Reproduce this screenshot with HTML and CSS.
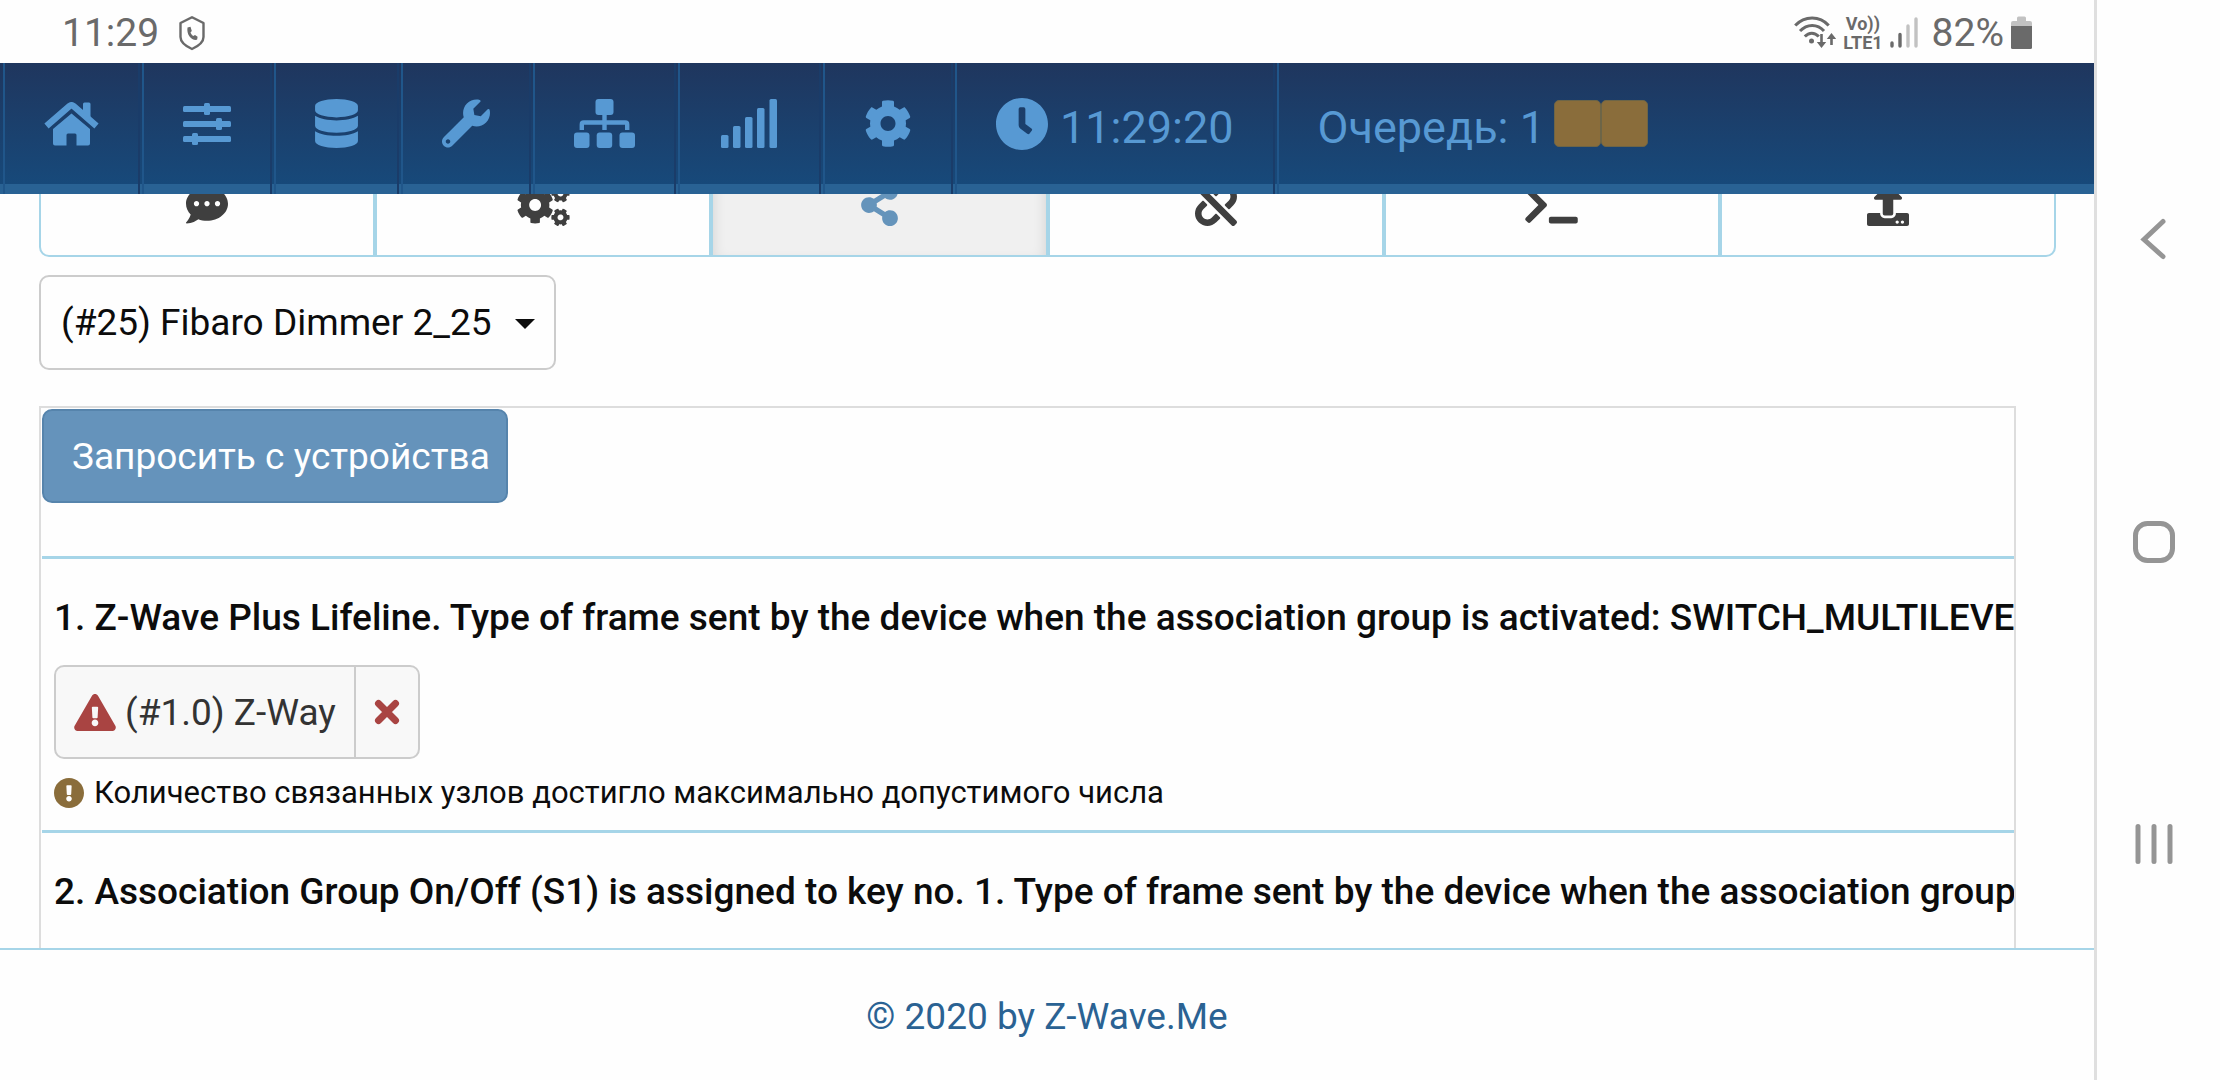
FILE: index.html
```html
<!DOCTYPE html>
<html lang="ru">
<head>
    <meta charset="UTF-8">
    <meta name="viewport" content="width=device-width, initial-scale=1.0">
    <title>Z-Wave.Me Expert UI</title>
    <link rel="stylesheet" href="styles.css">
</head>
<body>
    <!-- Gear shape, used in the menu and in the tabs -->
    <svg class="sprite" aria-hidden="true">
        <symbol id="gear" viewBox="0 0 512 512">
            <path d="M487.4 315.7l-42.6-24.6c4.3-23.2 4.3-47 0-70.2l42.6-24.6c4.9-2.8 7.1-8.6 5.5-14-11.1-35.6-30-67.8-54.7-94.6-3.8-4.1-10-5.1-14.8-2.3L380.8 110c-17.9-15.4-38.5-27.3-60.8-35.1V25.8c0-5.6-3.9-10.5-9.4-11.7-36.7-8.2-74.3-7.8-109.2 0-5.5 1.2-9.4 6.1-9.4 11.7V75c-22.2 7.9-42.8 19.8-60.8 35.1L88.7 85.5c-4.9-2.8-11-1.9-14.8 2.3-24.7 26.7-43.6 58.9-54.7 94.6-1.7 5.4.6 11.2 5.5 14L67.3 221c-4.3 23.2-4.3 47 0 70.2l-42.6 24.6c-4.9 2.8-7.1 8.6-5.5 14 11.1 35.6 30 67.8 54.7 94.6 3.8 4.1 10 5.1 14.8 2.3l42.6-24.6c17.9 15.4 38.5 27.3 60.8 35.1v49.2c0 5.6 3.9 10.5 9.4 11.7 36.7 8.2 74.3 7.8 109.2 0 5.5-1.2 9.4-6.1 9.4-11.7v-49.2c22.2-7.9 42.8-19.8 60.8-35.1l42.6 24.6c4.9 2.8 11 1.9 14.8-2.3 24.7-26.7 43.6-58.9 54.7-94.6 1.5-5.5-.7-11.3-5.6-14.1zM256 336c-44.1 0-80-35.9-80-80s35.9-80 80-80 80 35.9 80 80-35.9 80-80 80z"/>
        </symbol>
    </svg>

    <div class="screen">
        <!-- Phone status bar -->
        <div class="status-bar">
            <span class="status-text">11:29</span>
            <svg class="status-shield" width="26" height="36" viewBox="0 0 26 36">
                <path d="M13 2.2L24.5 8v14c0 5-6 9.500-11.500 12C7.500 31.500 1.500 27 1.500 22V8z" fill="none" stroke="#6a6a6a" stroke-width="2.400" stroke-linejoin="round"/>
                <path d="M8.500 12.500l3-.8 1.300 4.200-1.300 1.600c.6 1.600 1.400 2.600 2.700 3.400l1.800-.8 2.600 1.700-.5 3c-5.600 1-10.800-5-9.600-12.300z" fill="#6a6a6a"/>
            </svg>
            <div class="status-right">
                <svg width="42" height="34" viewBox="0 0 42 34">
                    <path d="M1.200 9.500c9.500-10 24.500-10 33.500 0M6 15c7-7.500 17.500-7.500 24 0M10.800 20.500c4.200-4.500 9.800-4.500 14 0" fill="none" stroke="#6a6a6a" stroke-width="3"/>
                    <circle cx="17.500" cy="25" r="2.500"/>
                    <path d="M27.500 18v11M37.500 29V21" stroke="#6a6a6a" stroke-width="2.600"/>
                    <path d="M22.800 26h9.400l-4.700 6zM32.800 23h9.400l-4.700-6z"/>
                </svg>
                <span class="volte"><span>Vo))</span><span>LTE1</span></span>
                <svg width="28" height="34" viewBox="0 0 28 34" stroke-width="3.400" stroke-linecap="round">
                    <path d="M2 27v3M10 18.500V30" stroke="#6a6a6a"/>
                    <path d="M18 10v20M26 3v27" stroke="#c2c2c2"/>
                </svg>
                <span class="status-text">82%</span>
                <svg class="battery" width="21" height="34" viewBox="0 0 21 34">
                    <path d="M6 5V2q0-1.500 1.500-1.500h6Q15 .5 15 2v3h4q2 0 2 2v4H0V7q0-2 2-2z" fill="#c2c2c2"/>
                    <path d="M0 10h21v21.500q0 1.500-1.500 1.500h-18Q0 33 0 31.500z" fill="#6a6a6a"/>
                </svg>
            </div>
        </div>

        <!-- Main menu -->
        <nav class="navbar">
            <a class="nav-item" href="#" aria-label="Home">
                <svg width="55" height="44" viewBox="0 0 54 44">
                    <path d="M2 24L25 4q2-1.500 4 0l23 20" fill="none" stroke="currentColor" stroke-width="6.400"/>
                    <path d="M38.500 2q0-1.500 1.500-1.500h4.500Q46 .5 46 2v16l-7.500-6.500zM27 11.500L45.500 27v14.500q0 2-2 2H32V33q0-1.500-1.500-1.500h-7Q22 31.500 22 33v10.500H10.500q-2 0-2-2V27z"/>
                </svg>
            </a>
            <a class="nav-item" href="#" aria-label="Control">
                <svg width="48" height="44" viewBox="0 0 48 44">
                    <rect y="4" width="48" height="6" rx="1.500"/>
                    <rect y="19" width="48" height="6" rx="1.500"/>
                    <rect y="34" width="48" height="6" rx="1.500"/>
                    <rect x="21" y="1" width="6" height="12" rx="1.500"/>
                    <rect x="33" y="16" width="6" height="12" rx="1.500"/>
                    <rect x="9" y="31" width="6" height="12" rx="1.500"/>
                </svg>
            </a>
            <a class="nav-item" href="#" aria-label="Device">
                <svg width="43" height="49" viewBox="0 0 448 512">
                    <path d="M448 73.143v45.714C448 159.143 347.667 192 224 192S0 159.143 0 118.857V73.143C0 32.857 100.333 0 224 0s224 32.857 224 73.143zM448 176v102.857C448 319.143 347.667 352 224 352S0 319.143 0 278.857V176c48.125 33.143 136.208 48.572 224 48.572S399.874 209.143 448 176zm0 160v102.857C448 479.143 347.667 512 224 512S0 479.143 0 438.857V336c48.125 33.143 136.208 48.572 224 48.572S399.874 369.143 448 336z"/>
                </svg>
            </a>
            <a class="nav-item" href="#" aria-label="Configuration">
                <svg width="48" height="49" viewBox="0 0 512 512">
                    <path d="M507.730 109.100c-2.240-9.030-13.540-12.090-20.120-5.510l-74.360 74.360-67.880-11.310-11.310-67.880 74.360-74.360c6.620-6.620 3.430-17.900-5.660-20.160-47.380-11.740-99.550.910-136.580 37.930-39.640 39.640-50.550 97.100-34.050 147.200L18.740 402.760c-24.990 24.990-24.990 65.510 0 90.500 24.990 24.990 65.510 24.990 90.500 0l213.210-213.210c50.120 16.710 107.470 5.680 147.370-34.220 37.070-37.070 49.700-89.320 37.910-136.730zM64 472c-13.250 0-24-10.750-24-24 0-13.260 10.750-24 24-24s24 10.740 24 24c0 13.250-10.750 24-24 24z"/>
                </svg>
            </a>
            <a class="nav-item" href="#" aria-label="Network">
                <svg width="61" height="49" viewBox="0 0 61 49">
                    <rect x="21.500" width="18" height="16" rx="3"/>
                    <rect y="33.500" width="15.500" height="15.500" rx="3"/>
                    <rect x="22.700" y="33.500" width="15.500" height="15.500" rx="3"/>
                    <rect x="45.500" y="33.500" width="15.500" height="15.500" rx="3"/>
                    <path d="M7.800 31v-5.500q0-2 2-2h41.400q2 0 2 2V31M30.500 15v16" fill="none" stroke="currentColor" stroke-width="4.400"/>
                </svg>
            </a>
            <a class="nav-item" href="#" aria-label="Signal">
                <svg width="61" height="49" viewBox="0 0 61 49">
                    <rect x="2" y="36" width="7.500" height="13" rx="1.500"/>
                    <rect x="14" y="27" width="7.500" height="22" rx="1.500"/>
                    <rect x="26" y="18" width="7.500" height="31" rx="1.500"/>
                    <rect x="38" y="9" width="7.500" height="40" rx="1.500"/>
                    <rect x="50.500" width="7.500" height="49" rx="1.500"/>
                </svg>
            </a>
            <a class="nav-item" href="#" aria-label="Settings">
                <svg width="48" height="49"><use href="#gear"/></svg>
            </a>
            <a class="nav-item" href="#">
                <svg width="52" height="52" viewBox="8 8 496 496">
                    <path d="M256,8C119,8,8,119,8,256S119,504,256,504,504,393,504,256,393,8,256,8Zm92.490,313h0l-20,25a16,16,0,0,1-22.490,2.500h0l-67-49.720a40,40,0,0,1-15-31.230V112a16,16,0,0,1,16-16h32a16,16,0,0,1,16,16V256l58,42.500A16,16,0,0,1,348.490,321Z"/>
                </svg>
                <span class="nav-text">11:29:20</span>
            </a>
            <a class="nav-item nav-queue" href="#">
                <span class="nav-text">Очередь: 1</span>
                <span class="queue-boxes"><i></i><i></i></span>
            </a>
        </nav>

        <main class="content">
            <!-- Tabs, scrolled under the menu -->
            <div class="tabs">
                <button class="tab" type="button" aria-label="Interview">
                    <svg width="42" height="42" viewBox="0 0 512 512">
                        <path d="M256 32C114.600 32 0 125.100 0 240c0 49.600 21.400 95 57 130.700C44.500 421.100 2.700 466 2.200 466.500c-2.200 2.300-2.800 5.700-1.500 8.700S4.800 480 8 480c66.300 0 116-31.800 140.600-51.400 32.700 12.300 69 19.400 107.400 19.400 141.400 0 256-93.100 256-208S397.400 32 256 32zM128 272c-17.700 0-32-14.300-32-32s14.300-32 32-32 32 14.300 32 32-14.300 32-32 32zm128 0c-17.700 0-32-14.300-32-32s14.300-32 32-32 32 14.300 32 32-14.300 32-32 32zm128 0c-17.700 0-32-14.300-32-32s14.300-32 32-32 32 14.300 32 32-14.300 32-32 32z"/>
                    </svg>
                </button>
                <button class="tab" type="button" aria-label="Configuration">
                    <svg width="53" height="42" viewBox="0 0 640 512">
                        <use href="#gear" x="-14" y="24" width="464" height="464"/>
                        <use href="#gear" x="412" y="0" width="230" height="230" transform="rotate(30 527 115)"/>
                        <use href="#gear" x="412" y="292" width="230" height="230" transform="rotate(30 527 407)"/>
                    </svg>
                </button>
                <button class="tab tab-active" type="button" aria-label="Associations">
                    <svg width="37" height="42" viewBox="0 0 448 512">
                        <path d="M352 320c-22.608 0-43.387 7.819-59.790 20.895l-102.486-64.054a96.551 96.551 0 0 0 0-41.683l102.486-64.054C308.613 184.181 329.392 192 352 192c53.019 0 96-42.981 96-96S405.019 0 352 0s-96 42.981-96 96c0 7.158.790 14.130 2.276 20.841L155.790 180.895C139.387 167.819 118.608 160 96 160c-53.019 0-96 42.981-96 96s42.981 96 96 96c22.608 0 43.387-7.819 59.790-20.895l102.486 64.054A96.301 96.301 0 0 0 256 416c0 53.019 42.981 96 96 96s96-42.981 96-96-42.981-96-96-96z"/>
                    </svg>
                </button>
                <button class="tab" type="button" aria-label="Link health">
                    <svg width="42" height="42" viewBox="0 0 512 512">
                        <path d="M304.083 405.907c4.686 4.686 4.686 12.284 0 16.971l-44.674 44.674c-59.263 59.262-155.693 59.266-214.961 0-59.264-59.265-59.264-155.696 0-214.960l44.675-44.675c4.686-4.686 12.284-4.686 16.971 0l39.598 39.598c4.686 4.686 4.686 12.284 0 16.971l-44.675 44.674c-28.072 28.073-28.072 73.750 0 101.823 28.072 28.072 73.750 28.073 101.824 0l44.674-44.674c4.686-4.686 12.284-4.686 16.971 0l39.597 39.598zm-56.568-260.216c4.686 4.686 12.284 4.686 16.971 0l44.674-44.674c28.072-28.075 73.750-28.073 101.824 0 28.072 28.073 28.072 73.750 0 101.823l-44.675 44.674c-4.686 4.686-4.686 12.284 0 16.971l39.598 39.598c4.686 4.686 12.284 4.686 16.971 0l44.675-44.675c59.263-59.265 59.263-155.695 0-214.960-59.266-59.264-155.695-59.264-214.961 0l-44.674 44.674c-4.686 4.686-4.686 12.284 0 16.971l39.597 39.598zm234.828 359.280l22.627-22.627c9.373-9.373 9.373-24.569 0-33.941L63.598 7.029c-9.373-9.373-24.569-9.373-33.941 0L7.029 29.657c-9.373 9.373-9.373 24.569 0 33.941l441.373 441.373c9.373 9.372 24.569 9.372 33.941 0z"/>
                    </svg>
                </button>
                <button class="tab" type="button" aria-label="Commands">
                    <svg width="53" height="42" viewBox="0 0 640 512">
                        <path d="M257.981 272.971L63.638 467.314c-9.373 9.373-24.569 9.373-33.941 0L7.029 444.647c-9.357-9.357-9.375-24.522-.040-33.901L161.011 256 6.990 101.255c-9.335-9.379-9.317-24.544.040-33.901l22.667-22.667c9.373-9.373 24.569-9.373 33.941 0L257.981 239.030c9.373 9.372 9.373 24.568 0 33.941zM640 456v-32c0-13.255-10.745-24-24-24H312c-13.255 0-24 10.745-24 24v32c0 13.255 10.745 24 24 24h304c13.255 0 24-10.745 24-24z"/>
                    </svg>
                </button>
                <button class="tab" type="button" aria-label="Firmware">
                    <svg width="42" height="42" viewBox="0 0 512 512">
                        <path d="M296 384h-80c-13.300 0-24-10.700-24-24V192h-87.700c-17.800 0-26.700-21.500-14.100-34.100L242.300 5.700c7.500-7.500 19.800-7.500 27.300 0l152.200 152.200c12.600 12.600 3.700 34.100-14.100 34.100H320v168c0 13.300-10.700 24-24 24zm216-8v112c0 13.300-10.700 24-24 24H24c-13.300 0-24-10.700-24-24V376c0-13.300 10.700-24 24-24h136v8c0 30.900 25.100 56 56 56h80c30.900 0 56-25.100 56-56v-8h136c13.300 0 24 10.700 24 24zm-124 88c0-11-9-20-20-20s-20 9-20 20 9 20 20 20 20-9 20-20zm64 0c0-11-9-20-20-20s-20 9-20 20 9 20 20 20 20-9 20-20z"/>
                    </svg>
                </button>
            </div>

            <div class="device-select">
                <select aria-label="Устройство">
                    <option>(#25) Fibaro Dimmer 2_25</option>
                </select>
            </div>

            <div class="panel">
                <button class="btn-primary" type="button">Запросить с устройства</button>

                <section class="group">
                    <h2>1. Z-Wave Plus Lifeline. Type of frame sent by the device when the association group is activated: SWITCH_MULTILEVEL</h2>
                    <div class="node">
                        <button class="node-name" type="button">
                            <svg width="42" height="37" viewBox="0 0 576 512">
                                <path d="M569.517 440.013C587.975 472.007 564.806 512 527.940 512H48.054c-36.937 0-59.999-40.055-41.577-71.987L246.423 23.985c18.467-32.009 64.720-31.951 83.154 0l239.940 416.028zM288 354c-25.405 0-46 20.595-46 46s20.595 46 46 46 46-20.595 46-46-20.595-46-46-46zm-43.673-165.346l7.418 136c.347 6.364 5.609 11.346 11.982 11.346h48.546c6.373 0 11.635-4.982 11.982-11.346l7.418-136c.375-6.874-5.098-12.654-11.982-12.654h-63.383c-6.884 0-12.356 5.780-11.981 12.654z"/>
                            </svg>
                            <span>(#1.0) Z-Way</span>
                        </button>
                        <button class="node-remove" type="button" aria-label="Удалить">
                            <svg width="26" height="26" viewBox="0 0 26 26">
                                <path d="M4.500 4.500l17 17M21.500 4.500l-17 17" stroke="currentColor" stroke-width="7" stroke-linecap="round"/>
                            </svg>
                        </button>
                    </div>
                    <p class="notice">
                        <svg width="30" height="30" viewBox="8 8 496 496">
                            <path d="M504 256c0 136.997-111.043 248-248 248S8 392.997 8 256C8 119.083 119.043 8 256 8s248 111.083 248 248zm-248 50c-25.405 0-46 20.595-46 46s20.595 46 46 46 46-20.595 46-46-20.595-46-46-46zm-43.673-165.346l7.418 136c.347 6.364 5.609 11.346 11.982 11.346h48.546c6.373 0 11.635-4.982 11.982-11.346l7.418-136c.375-6.874-5.098-12.654-11.982-12.654h-63.383c-6.884 0-12.356 5.780-11.981 12.654z"/>
                        </svg>
                        <span>Количество связанных узлов достигло максимально допустимого числа</span>
                    </p>
                </section>

                <section class="group">
                    <h2>2. Association Group On/Off (S1) is assigned to key no. 1. Type of frame sent by the device when the association group</h2>
                </section>
            </div>
        </main>

        <footer class="footer">
            <a href="#">© 2020 by Z-Wave.Me</a>
        </footer>
    </div>

    <!-- Phone navigation keys -->
    <div class="phone-keys">
        <button type="button" aria-label="Back">
            <svg width="42" height="42" viewBox="0 0 42 42"><path d="M30 3.500L11 21.500l19 17" stroke-linecap="round"/></svg>
        </button>
        <button type="button" aria-label="Home">
            <svg width="42" height="42" viewBox="0 0 42 42"><rect x="2.500" y="2.500" width="37" height="37" rx="12"/></svg>
        </button>
        <button type="button" aria-label="Recent">
            <svg width="42" height="42" viewBox="0 0 42 42"><path d="M5 3.500v35M21 3.500v35M37 3.500v35" stroke-linecap="round"/></svg>
        </button>
    </div>
</body>
</html>
```

FILE: styles.css
```css
* {
    box-sizing: border-box;
}

body {
    margin: 0;
    height: 100vh;
    display: flex;
    background-color: #fefefe;
    color: #0c0c0c;
    font-family: Roboto, "Liberation Sans", sans-serif;
    font-size: 37px;
    overflow: hidden;
}

button,
select {
    font: inherit;
    color: inherit;
    margin: 0;
    cursor: pointer;
}

a {
    text-decoration: none;
}

svg {
    flex: none;
    display: block;
    fill: currentColor;
}

.sprite {
    position: absolute;
    width: 0;
    height: 0;
}

.screen {
    flex: 1;
    min-width: 0;
    display: flex;
    flex-direction: column;
}

/* Phone status bar */
.status-bar {
    flex: none;
    height: 63px;
    display: flex;
    align-items: center;
    padding: 2px 62px 0;
    color: #6a6a6a;
}

.status-text {
    font-size: 39px;
}

.status-shield {
    margin-left: 20px;
}

.status-right {
    margin-left: auto;
    display: flex;
    align-items: center;
    gap: 7px;
}

.volte {
    display: flex;
    flex-direction: column;
    align-items: center;
    font-size: 18px;
    font-weight: 700;
    line-height: 19px;
}

.status-right .status-text {
    margin-left: 7px;
}

/* Menu */
.navbar {
    flex: none;
    position: relative;
    z-index: 2;
    height: 131px;
    display: flex;
    padding-left: 3px;
    background: linear-gradient(#1f365e, #17497a 121px, #296294 121px);
}

.nav-item {
    display: flex;
    align-items: center;
    padding: 0 39px 10px;
    margin-right: 2px;
    border-left: 2px solid #20568a;
    border-right: 2px solid #1a3c69;
    color: #5799d3;
    font-size: 45px;
    white-space: nowrap;
}

.nav-text {
    padding-top: 7px;
}

.nav-item svg + .nav-text {
    margin-left: 12px;
}

.nav-queue {
    border-right: none;
}

.queue-boxes {
    display: flex;
    margin-left: 9px;
}

.queue-boxes i {
    width: 47px;
    height: 47px;
    background-color: #8a6d3b;
    border: 1px solid #6d6547;
    border-radius: 5px;
}

/* Page */
.content {
    flex: 1;
    min-height: 0;
    display: flex;
    flex-direction: column;
    align-items: flex-start;
    padding: 0 38px 0 39px;
    overflow: hidden;
    margin-top: -41px;
}

.tabs {
    flex: none;
    align-self: stretch;
    display: flex;
    margin-bottom: 18px;
}

.tab {
    flex: 1;
    height: 104px;
    display: flex;
    align-items: center;
    justify-content: center;
    background-color: #fefefe;
    border: 2px solid #a6d5e8;
    color: #3f3f3f;
}

.tab:first-child {
    border-radius: 10px 0 0 10px;
}

.tab:last-child {
    border-radius: 0 10px 10px 0;
}

.tab-active {
    background-color: #f0f0f0;
    box-shadow: inset 0 8px 14px rgba(0, 0, 0, 0.13);
    color: #6594bb;
}

.device-select {
    flex: none;
    position: relative;
    margin-bottom: 36px;
}

.device-select select {
    appearance: none;
    display: block;
    height: 95px;
    padding: 0 62px 0 20px;
    background-color: #fefefe;
    border: 2px solid #ccc;
    border-radius: 10px;
}

/* Arrow of the drop-down */
.device-select::after {
    content: "";
    position: absolute;
    right: 21px;
    top: 44px;
    border: 10px solid transparent;
    border-top-color: #0c0c0c;
    border-bottom: none;
    pointer-events: none;
}

.panel {
    flex: 1 0 auto;
    align-self: stretch;
    margin-right: 40px;
    padding: 1px 0 20px 1px;
    border: 2px solid #ddd;
}

.btn-primary {
    display: block;
    height: 94px;
    margin-bottom: 53px;
    padding: 0 16px 0 28px;
    background-color: #6593bb;
    border: 2px solid #5684ac;
    border-radius: 10px;
    color: #fff;
}

.group {
    padding: 34px 0 16px 12px;
    border-top: 3px solid #a6d5e8;
    overflow: hidden;
}

.group h2 {
    margin: 0 0 22px;
    font-size: 37px;
    font-weight: 500;
    line-height: 50px;
    white-space: nowrap;
}

.node {
    display: inline-flex;
    height: 94px;
    margin-bottom: 13px;
    vertical-align: top;
    background-color: #f8f8f8;
    border: 2px solid #ccc;
    border-radius: 10px;
}

.node button {
    display: flex;
    align-items: center;
    background: none;
    border: none;
    padding: 0 18px;
}

.node .node-name {
    gap: 9px;
    color: #333;
}

.node svg,
.node .node-remove {
    color: #a94442;
}

.node .node-remove {
    border-left: 2px solid #ccc;
}

.notice {
    display: flex;
    align-items: center;
    gap: 10px;
    margin: 0;
    font-size: 31px;
    line-height: 42px;
}

.notice svg {
    color: #8a6d3b;
}

.footer {
    flex: none;
    height: 132px;
    padding-top: 2px;
    display: flex;
    align-items: center;
    justify-content: center;
    background-color: #fefefe;
    border-top: 2px solid #a6d5e8;
}

.footer a {
    color: #2a6293;
}

/* Phone navigation keys */
.phone-keys {
    flex: none;
    width: 126px;
    display: flex;
    flex-direction: column;
    align-items: center;
    justify-content: space-between;
    padding: 218px 9px 215px 0;
    border-left: 3px solid #dfdfdf;
}

.phone-keys button {
    padding: 0;
    background: none;
    border: none;
}

.phone-keys svg {
    fill: none;
    stroke: #959595;
    stroke-width: 5px;
}
```
